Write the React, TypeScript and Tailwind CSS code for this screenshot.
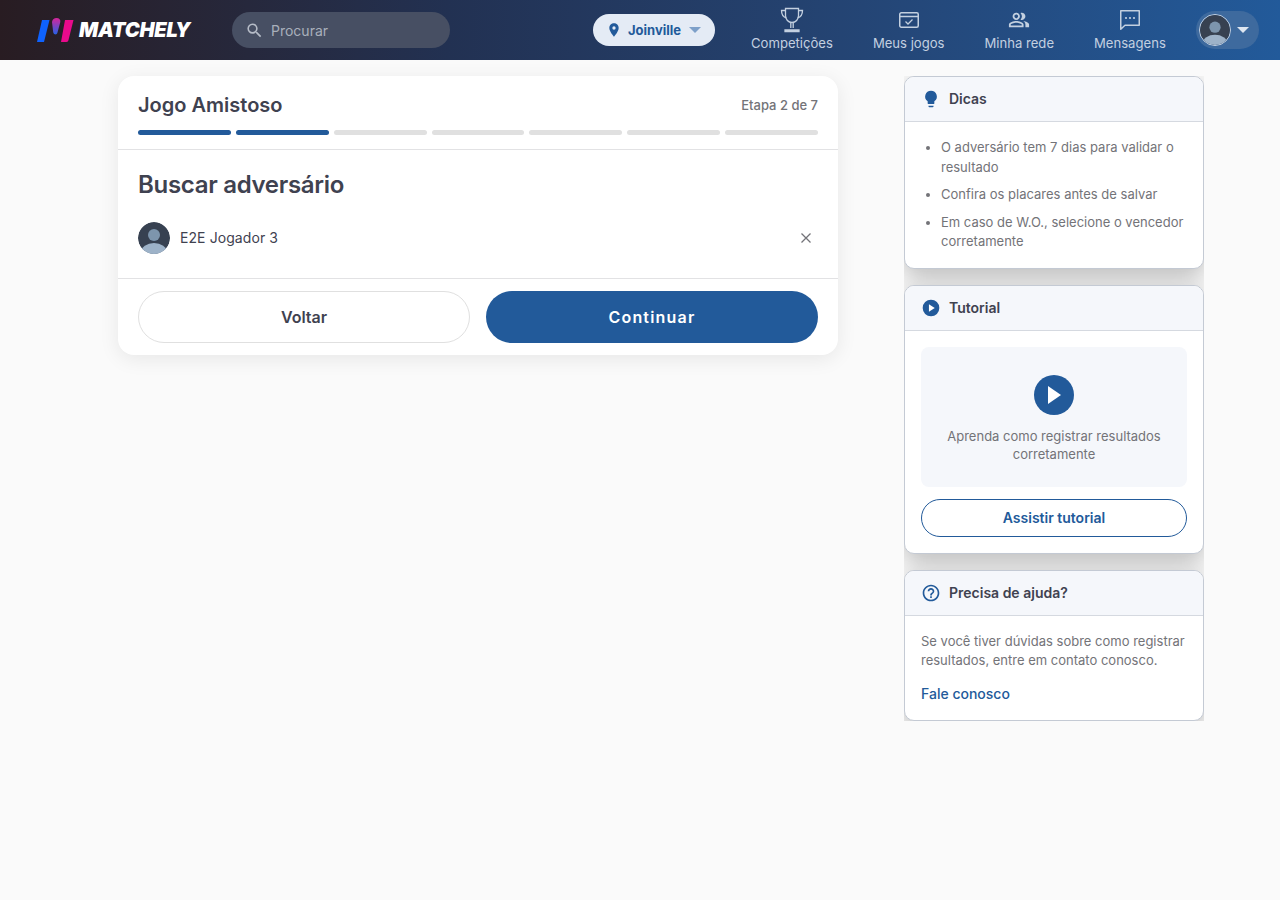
import React from "react";

const Avatar = ({ size }: { size: number }) => (
  <svg width={size} height={size} viewBox="0 0 32 32" className="block shrink-0 rounded-full">
    <circle cx="16" cy="16" r="16" fill="#374151" />
    <circle cx="16" cy="13" r="6" fill="#7d95ad" />
    <ellipse cx="16" cy="30" rx="13" ry="9" fill="#9db2c8" />
  </svg>
);

const Caret = ({ color }: { color: string }) => (
  <svg width="12" height="6" viewBox="0 0 12 6" className="block"><path d="M0 0h12L6 6z" fill={color} /></svg>
);

const NavItem = ({ label, children }: { label: string; children: React.ReactNode }) => (
  <div className="flex flex-col items-center text-[#c3d0e0]">
    <div className="h-[26px] flex items-center justify-center">{children}</div>
    <span className="text-[13.100px] leading-4 mt-[2px]">{label}</span>
  </div>
);

const SideCard = ({ icon, title, children }: { icon: React.ReactNode; title: string; children: React.ReactNode }) => (
  <section className="bg-white border border-[#c4cad4] rounded-[10px] shadow-[0_8px_24px_rgba(0,0,0,0.25)]">
    <header className="h-[45px] bg-[#f5f7fb] border-b border-[#d5d9e0] rounded-t-[9px] flex items-center pl-4 gap-[8px]">
      <span className="w-[20px] h-[20px] flex items-center justify-center">{icon}</span>
      <h3 className="text-sm font-semibold text-[#3f4250]">{title}</h3>
    </header>
    {children}
  </section>
);

export default function App() {
  return (
    <div className="min-h-[900px] bg-[#fafafa] font-['Inter',sans-serif]">
      <nav className="h-[60px] bg-gradient-to-r from-[#281c22] via-[#223152] via-35% to-[#225a9a] flex items-center">
        <div className="ml-[36px] w-[156px] flex items-center gap-[5px]">
          <svg width="38" height="24" viewBox="0 0 38 24" className="block shrink-0">
            <defs>
              <linearGradient id="mid" x1="0" y1="0" x2="0" y2="1">
                <stop offset="0" stopColor="#d6249a" />
                <stop offset="1" stopColor="#2463e8" />
              </linearGradient>
            </defs>
            <path d="M6 2h7.500L8 24H1z" fill="#0f62fe" />
            <path d="M16 4c.4-2.500 2.200-4 4.500-4 2.800 0 4.300 1.800 3.800 4l-2.800 10.500c-.4 1.500-1.500 2.300-2.700 1.800-1-.4-1.600-1.300-1.700-2.800z" fill="url(#mid)" />
            <path d="M29 2h8.500l-5 20c-.2 1.200-1 2-2 2H25z" fill="#ea0a8c" />
          </svg>
          <span className="text-[20px] leading-none font-black italic text-white tracking-[-0.2px]">MATCHELY</span>
        </div>

        <div className="ml-[40px] w-[218px] h-[36px] rounded-full bg-[#474f63] flex items-center pl-[13px] gap-[7px]">
          <svg width="19" height="19" viewBox="0 0 24 24" fill="#b6bcc7"><path d="M15.500 14h-.79l-.28-.27A6.471 6.471 0 0 0 16 9.500 6.500 6.500 0 1 0 9.500 16c1.610 0 3.090-.59 4.230-1.570l.27.28v.79l5 4.990L20.490 19l-4.990-5zm-6 0C7.010 14 5 11.990 5 9.500S7.010 5 9.500 5 14 7.010 14 9.500 11.990 14 9.500 14z" /></svg>
          <span className="text-sm text-[#a9afbb] pt-[1px]">Procurar</span>
        </div>

        <button className="ml-[143px] w-[122px] h-[32px] rounded-full bg-[#e4ebf5] flex items-center pl-[13px] text-[#225a9a]">
          <svg width="16" height="16" viewBox="0 0 24 24" fill="#225a9a" className="mr-[6px]"><path d="M12 2C8.130 2 5 5.130 5 9c0 5.250 7 13 7 13s7-7.750 7-13c0-3.870-3.130-7-7-7zm0 9.500a2.500 2.500 0 1 1 0-5 2.500 2.500 0 0 1 0 5z" /></svg>
          <span className="text-[13px] font-bold pt-[1px]">Joinville</span>
          <span className="ml-[8px]"><Caret color="#7da0c9" /></span>
        </button>

        <div className="ml-[36px] self-start flex items-start gap-[40px] pt-[7px]">
          <NavItem label="Competições">
            <svg width="24" height="26" viewBox="0 0 24 26" fill="none" stroke="#c3d0e0" strokeWidth="1.300">
              <path d="M5.500 1.500h13v7c0 4-2.800 7-6.500 7s-6.500-3-6.500-7z" />
              <path d="M5.500 3.500H1.500c0 4 1.500 6.500 5 7.500M18.500 3.500h4c0 4-1.500 6.500-5 7.500" />
              <path d="M10.800 15.500v5.500M13.200 15.500v5.500" />
              <path d="M5 23h14v1.500H5z" fill="#c3d0e0" />
            </svg>
          </NavItem>
          <NavItem label="Meus jogos">
            <svg width="22" height="18" viewBox="0 0 22 18" fill="none" stroke="#c3d0e0" strokeWidth="1.500">
              <rect x="1.750" y="1.750" width="18.500" height="14.500" rx="1.500" />
              <path d="M1.750 5.500h18.500" />
              <path d="M7.500 10.500l2.500 2.500 4.500-4.500" strokeWidth="1.300" />
            </svg>
          </NavItem>
          <NavItem label="Minha rede">
            <svg width="22" height="22" viewBox="0 0 24 24" fill="#c3d0e0"><path d="M16.670 13.130C18.040 14.060 19 15.320 19 17v3h4v-3c0-2.180-3.570-3.470-6.330-3.870zM15 12c2.210 0 4-1.790 4-4s-1.790-4-4-4c-.47 0-.91.100-1.330.24a5.980 5.980 0 0 1 0 7.520c.42.140.86.240 1.330.240zM9 12c2.210 0 4-1.790 4-4s-1.790-4-4-4-4 1.790-4 4 1.790 4 4 4zm0-6c1.100 0 2 .9 2 2s-.9 2-2 2-2-.9-2-2 .9-2 2-2zM9 13c-2.670 0-8 1.340-8 4v3h16v-3c0-2.660-5.330-4-8-4zm6 5H3v-.99C3.200 16.290 6.300 15 9 15s5.800 1.290 6 2V18z" /></svg>
          </NavItem>
          <NavItem label="Mensagens">
            <svg width="22" height="24" viewBox="0 0 22 24" fill="none" stroke="#c3d0e0" strokeWidth="1.500">
              <path d="M1.750 2.750h18.500v14.500H6l-4.250 4z" strokeLinejoin="round" />
              <circle cx="7" cy="10" r="1.100" fill="#c3d0e0" stroke="none" />
              <circle cx="11" cy="10" r="1.100" fill="#c3d0e0" stroke="none" />
              <circle cx="15" cy="10" r="1.100" fill="#c3d0e0" stroke="none" />
            </svg>
          </NavItem>
        </div>

        <div className="ml-[30px] w-[63px] h-[38px] rounded-full bg-[#3e6a9e] flex items-center pl-[3px] gap-[6px]">
          <span className="block rounded-full border border-[#c3d0e0]"><Avatar size={30} /></span>
          <Caret color="#dfe7f1" />
        </div>
      </nav>

      <main className="pl-[118px] pt-4 flex items-start gap-[66px]">
        <div className="w-[720px] bg-white rounded-[16px] shadow-[0_4px_20px_rgba(0,0,0,0.08)]">
          <div className="px-5 pt-4 pb-[14px] border-b border-[#e2e2e4]">
            <div className="flex items-center justify-between h-[26px]">
              <h1 className="text-xl font-semibold text-[#3f4250]">Jogo Amistoso</h1>
              <span className="text-[13px] font-medium text-[#737378] pt-[1px]">Etapa 2 de 7</span>
            </div>
            <div className="flex gap-[5px] mt-[12px]">
              {[0, 1, 2, 3, 4, 5, 6].map((i) => (
                <div key={i} className={i < 2 ? "flex-1 h-[5px] rounded-full bg-[#225a9a]" : "flex-1 h-[5px] rounded-full bg-[#e0e0e0]"} />
              ))}
            </div>
          </div>
          <div className="px-5 pt-[20px] pb-[24px] border-b border-[#e2e2e4]">
            <h2 className="text-2xl leading-[30px] font-semibold tracking-[-0.3px] text-[#3f4250]">Buscar adversário</h2>
            <div className="flex items-center mt-[22px]">
              <Avatar size={32} />
              <span className="ml-[10px] text-sm tracking-[0.08px] text-[#3f4250]">E2E Jogador 3</span>
              <svg width="12" height="12" viewBox="0 0 12 12" className="ml-auto mr-[6px]" stroke="#737378" strokeWidth="1.300"><path d="M1.500 1.500l9 9M10.500 1.500l-9 9" /></svg>
            </div>
          </div>
          <div className="px-5 py-3 flex gap-4">
            <button className="w-[332px] h-[52px] rounded-full border border-[#e0e0e0] bg-white text-base font-semibold text-[#3f4250]">Voltar</button>
            <button className="w-[332px] h-[52px] rounded-full bg-[#225a9a] text-base font-semibold text-white tracking-[1.200px]">Continuar</button>
          </div>
        </div>

        <aside className="w-[300px] overflow-hidden flex flex-col gap-4">
          <SideCard
            title="Dicas"
            icon={<svg width="20" height="20" viewBox="0 0 24 24" fill="#225a9a"><path d="M12 2a7 7 0 0 0-4 12.740V17a1 1 0 0 0 1 1h6a1 1 0 0 0 1-1v-2.260A7 7 0 0 0 12 2zM9 21a1 1 0 0 0 1 1h4a1 1 0 0 0 1-1v-1H9z" /></svg>}
          >
            <ul className="list-disc pl-9 pr-4 pt-4 pb-[16.500px] text-[13px] leading-[19.500px] text-[#737378] marker:text-[#737378] flex flex-col gap-[8px]">
              <li>O adversário tem 7 dias para validar o resultado</li>
              <li>Confira os placares antes de salvar</li>
              <li>Em caso de W.O., selecione o vencedor corretamente</li>
            </ul>
          </SideCard>

          <SideCard
            title="Tutorial"
            icon={<svg width="20" height="20" viewBox="0 0 24 24"><circle cx="12" cy="12" r="10" fill="#225a9a" /><path d="M9.500 7.500v9l7-4.500z" fill="white" /></svg>}
          >
            <div className="p-4">
              <div className="h-[140px] rounded-lg bg-[#f5f7fb] flex flex-col items-center pt-7 px-4 text-center">
                <div className="w-10 h-10 rounded-full bg-[#225a9a] flex items-center justify-center">
                  <svg width="16" height="18" viewBox="0 0 16 18"><path d="M2 0v18l13-9z" fill="white" /></svg>
                </div>
                <p className="mt-[12px] text-[13px] leading-[18px] text-[#737378] w-[220px]">Aprenda como registrar resultados corretamente</p>
              </div>
              <button className="mt-3 w-full h-[38px] rounded-full border border-[#225a9a] bg-white text-sm font-semibold text-[#225a9a]">Assistir tutorial</button>
            </div>
          </SideCard>

          <SideCard
            title="Precisa de ajuda?"
            icon={<svg width="20" height="20" viewBox="0 0 24 24" fill="#225a9a"><path d="M11 18h2v-2h-2v2zm1-16C6.480 2 2 6.480 2 12s4.480 10 10 10 10-4.480 10-10S17.520 2 12 2zm0 18c-4.410 0-8-3.590-8-8s3.590-8 8-8 8 3.590 8 8-3.590 8-8 8zm0-14c-2.210 0-4 1.790-4 4h2c0-1.100.9-2 2-2s2 .9 2 2c0 2-3 1.750-3 5h2c0-2.250 3-2.500 3-5 0-2.210-1.790-4-4-4z" /></svg>}
          >
            <div className="px-4 pt-4 pb-4">
              <p className="text-[13px] leading-[19px] text-[#737378]">Se você tiver dúvidas sobre como registrar resultados, entre em contato conosco.</p>
              <a className="block mt-[13px] text-sm leading-[21px] font-medium text-[#225a9a]">Fale conosco</a>
            </div>
          </SideCard>
        </aside>
      </main>
    </div>
  );
}
